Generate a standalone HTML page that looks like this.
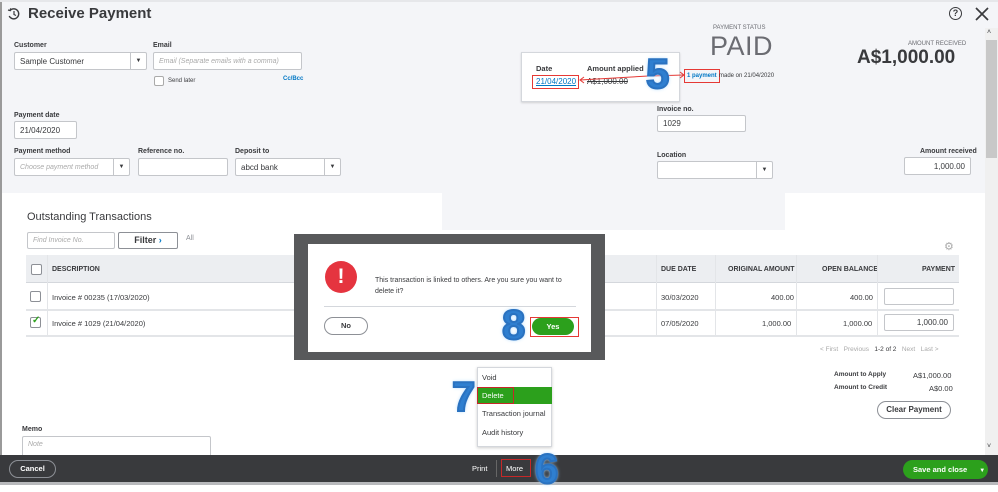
<!DOCTYPE html>
<html><head><meta charset="utf-8"><style>
*{box-sizing:border-box;margin:0;padding:0}
body{width:998px;height:485px;overflow:hidden;position:relative;background:#fff;font-family:"Liberation Sans",sans-serif;color:#393a3d;font-size:8px}
.a{position:absolute}
.lbl{position:absolute;font-size:7px;font-weight:bold;color:#393a3d}
.inp{position:absolute;background:#fff;border:1px solid #c4c6ca;border-radius:2px;font-size:8px;padding-left:5px;display:flex;align-items:center}
.ph{color:#aaa;font-style:italic;font-size:7px}
.dd{position:absolute;right:0;top:0;bottom:0;width:16px;border-left:1px solid #c4c6ca;display:flex;align-items:center;justify-content:center;font-size:6px}
.num{position:absolute;font-weight:bold;font-size:42px;color:#2f7fd0;-webkit-text-stroke:2px #2a72c0;text-shadow:0 0 2px #cfe8ff,0 0 4px #9cd0ff;line-height:1;font-family:"Liberation Sans",sans-serif}
.th{position:absolute;top:0;height:28px;display:flex;align-items:center;font-size:7px;font-weight:bold}
.cell{position:absolute;font-size:7.5px}
.cb{position:absolute;width:11px;height:11px;border:1px solid #8d9096;border-radius:2px;background:#fff}
</style></head><body>
<div class="a" style="left:0;top:0;width:998px;height:193px;background:#f4f5f8"></div>
<div class="a" style="left:442px;top:193px;width:343px;height:37px;background:#f4f5f8"></div>
<div class="a" style="left:0;top:0;width:2px;height:455px;background:#9a9a9a"></div>
<div class="a" style="left:0;top:0;width:998px;height:2px;background:#e6e7ea"></div>
<div class="a" style="left:985px;top:28px;width:13px;height:427px;background:#f0f0f0"></div>
<div class="a" style="left:986px;top:40px;width:11px;height:118px;background:#c8c8c8"></div>
<div class="a" style="left:987px;top:29px;font-size:7px">˄</div>
<div class="a" style="left:987px;top:443px;font-size:7px">˅</div>

<svg class="a" style="left:7px;top:7px" width="14" height="14" viewBox="0 0 14 14"><path d="M3 3.5A5 5 0 1 1 2.2 9" fill="none" stroke="#393a3d" stroke-width="1.4"/><path d="M7 4v3.5l2 1" fill="none" stroke="#393a3d" stroke-width="1.2"/><path d="M1 3l2.2.6L3.6 1.3" fill="none" stroke="#393a3d" stroke-width="1.2"/></svg>
<div class="a" style="left:28px;top:5px;font-size:15px;font-weight:bold;color:#393a3d">Receive Payment</div>
<div class="a" style="left:949px;top:7px;width:13px;height:13px;border:1.4px solid #393a3d;border-radius:50%;font-size:9px;font-weight:bold;text-align:center;line-height:11px">?</div>
<svg class="a" style="left:975px;top:7px" width="14" height="14"><path d="M1 1L13 13M13 1L1 13" stroke="#393a3d" stroke-width="1.7"/></svg>

<div class="lbl" style="left:14px;top:42px">Customer</div>
<div class="inp" style="left:14px;top:52px;width:133px;height:18px">Sample Customer<div class="dd">▼</div></div>
<div class="lbl" style="left:153px;top:42px">Email</div>
<div class="inp" style="left:153px;top:52px;width:149px;height:18px"><span class="ph">Email (Separate emails with a comma)</span></div>
<div class="cb" style="left:154px;top:76px;width:10px;height:10px;border-color:#aaa"></div>
<div class="a" style="left:168px;top:78px;font-size:6px">Send later</div>
<div class="a" style="left:283px;top:76px;font-size:6px;color:#0077c5;font-weight:bold">Cc/Bcc</div>

<div class="lbl" style="left:14px;top:112px">Payment date</div>
<div class="inp" style="left:14px;top:121px;width:63px;height:18px">21/04/2020</div>
<div class="lbl" style="left:14px;top:148px">Payment method</div>
<div class="inp" style="left:14px;top:158px;width:116px;height:18px"><span class="ph">Choose payment method</span><div class="dd">▼</div></div>
<div class="lbl" style="left:138px;top:148px">Reference no.</div>
<div class="inp" style="left:138px;top:158px;width:90px;height:18px"></div>
<div class="lbl" style="left:235px;top:148px">Deposit to</div>
<div class="inp" style="left:235px;top:158px;width:106px;height:18px">abcd bank<div class="dd">▼</div></div>

<div class="a" style="left:713px;top:25px;font-size:6px;color:#6b6c72">PAYMENT STATUS</div>
<div class="a" style="left:710px;top:31px;font-size:27px;color:#6b6c72;letter-spacing:.5px">PAID</div>
<div class="a" style="left:908px;top:41px;font-size:6px;color:#6b6c72">AMOUNT RECEIVED</div>
<div class="a" style="left:857px;top:47px;font-size:19px;font-weight:bold;color:#393a3d">A$1,000.00</div>

<div class="a" style="left:521px;top:52px;width:159px;height:50px;background:#fff;border:1px solid #d4d7dc;box-shadow:0 1px 2px rgba(0,0,0,.15)"></div>
<div class="a" style="left:536px;top:64px;font-size:7.5px;font-weight:bold">Date</div>
<div class="a" style="left:587px;top:64px;font-size:7.5px;font-weight:bold">Amount applied</div>
<div class="a" style="left:532px;top:75px;width:47px;height:14px;border:1px solid #e53935"></div>
<div class="a" style="left:536px;top:77px;font-size:8px;color:#0077c5;text-decoration:underline">21/04/2020</div>
<div class="a" style="left:587px;top:77px;font-size:8px;text-decoration:line-through">A$1,000.00</div>
<svg class="a" style="left:578px;top:68px" width="110" height="20"><path d="M2 12L70 8M72 8L106 7" stroke="#e53935" stroke-width="1" fill="none"/><path d="M6 9L2 12L6 15M102 4L106 7L102 10" stroke="#e53935" fill="none"/></svg>
<div class="a" style="left:684px;top:69px;width:36px;height:14px;border:1px solid #e53935"></div>
<div class="a" style="left:687px;top:73px;font-size:6px;color:#0077c5;font-weight:bold">1 payment</div>
<div class="a" style="left:719px;top:73px;font-size:6px">made on 21/04/2020</div>
<div class="num" style="left:646px;top:53px">5</div>

<div class="lbl" style="left:657px;top:106px">Invoice no.</div>
<div class="inp" style="left:657px;top:115px;width:89px;height:17px">1029</div>
<div class="lbl" style="left:657px;top:152px">Location</div>
<div class="inp" style="left:657px;top:161px;width:116px;height:18px"><div class="dd">▼</div></div>
<div class="lbl" style="left:920px;top:148px">Amount received</div>
<div class="inp" style="left:904px;top:157px;width:67px;height:18px;justify-content:flex-end;padding-right:5px">1,000.00</div>

<div class="a" style="left:27px;top:211px;font-size:11px">Outstanding Transactions</div>
<div class="inp" style="left:27px;top:232px;width:88px;height:17px"><span class="ph">Find Invoice No.</span></div>
<div class="a" style="left:118px;top:232px;width:60px;height:17px;border:1px solid #8d9096;border-radius:2px;font-size:9px;font-weight:bold;text-align:center;line-height:15px">Filter <span style="color:#0077c5">›</span></div>
<div class="a" style="left:186px;top:235px;font-size:7px;color:#8d9096">All</div>
<div class="a" style="left:944px;top:240px;font-size:11px;color:#aaa">⚙</div>

<div class="a" style="left:26px;top:255px;width:933px;height:28px;background:#eceef1;border-bottom:1px solid #d4d7dc"></div>
<div class="a" style="left:47px;top:255px;width:1px;height:81px;background:#e3e5e8"></div>
<div class="cb" style="left:31px;top:264px"></div>
<div class="th" style="left:52px;top:255px">DESCRIPTION</div>
<div class="th" style="left:661px;top:255px">DUE DATE</div>
<div class="th" style="left:728px;top:255px">ORIGINAL AMOUNT</div>
<div class="th" style="left:822px;top:255px">OPEN BALANCE</div>
<div class="th" style="left:922px;top:255px">PAYMENT</div>
<div class="a" style="left:656px;top:255px;width:1px;height:81px;background:#e3e5e8"></div>
<div class="a" style="left:715px;top:255px;width:1px;height:81px;background:#e3e5e8"></div>
<div class="a" style="left:796px;top:255px;width:1px;height:81px;background:#e3e5e8"></div>
<div class="a" style="left:877px;top:255px;width:1px;height:81px;background:#e3e5e8"></div>
<div class="a" style="left:26px;top:309px;width:933px;height:2px;background:#e3e5e8"></div>
<div class="a" style="left:26px;top:335px;width:933px;height:2px;background:#e3e5e8"></div>
<div class="cb" style="left:30px;top:291px"></div>
<div class="cell" style="left:52px;top:293px">Invoice # 00235 (17/03/2020)</div>
<div class="cell" style="left:661px;top:293px">30/03/2020</div>
<div class="cell" style="left:771px;top:293px">400.00</div>
<div class="cell" style="left:850px;top:293px">400.00</div>
<div class="inp" style="left:884px;top:288px;width:70px;height:17px"></div>
<div class="cb" style="left:30px;top:317px"></div>
<div class="a" style="left:32px;top:315px;color:#2ca01c;font-size:10px;font-weight:bold">✓</div>
<div class="cell" style="left:52px;top:319px">Invoice # 1029 (21/04/2020)</div>
<div class="cell" style="left:661px;top:319px">07/05/2020</div>
<div class="cell" style="left:762px;top:319px">1,000.00</div>
<div class="cell" style="left:843px;top:319px">1,000.00</div>
<div class="inp" style="left:884px;top:314px;width:70px;height:17px;justify-content:flex-end;padding-right:5px">1,000.00</div>

<div class="a" style="left:820px;top:346px;font-size:6.5px;color:#aaa">&lt; First &nbsp; Previous &nbsp; <span style="color:#393a3d">1-2 of 2</span> &nbsp; Next &nbsp; Last &gt;</div>
<div class="a" style="left:834px;top:371px;font-size:6.5px;font-weight:bold">Amount to Apply</div>
<div class="a" style="left:913px;top:371px;font-size:7.5px">A$1,000.00</div>
<div class="a" style="left:834px;top:384px;font-size:6.5px;font-weight:bold">Amount to Credit</div>
<div class="a" style="left:929px;top:384px;font-size:7.5px">A$0.00</div>
<div class="a" style="left:877px;top:401px;width:74px;height:18px;border:1px solid #8d9096;border-radius:9px;font-size:8px;font-weight:bold;text-align:center;line-height:16px">Clear Payment</div>

<div class="lbl" style="left:22px;top:426px">Memo</div>
<div class="inp" style="left:22px;top:436px;width:189px;height:22px;align-items:flex-start;padding-top:4px"><span class="ph">Note</span></div>

<div class="a" style="left:294px;top:234px;width:311px;height:126px;background:#58595b"></div>
<div class="a" style="left:308px;top:244px;width:283px;height:108px;background:#fff"></div>
<div class="a" style="left:325px;top:261px;width:32px;height:32px;border-radius:50%;background:#e5343f;color:#fff;font-size:21px;font-weight:bold;text-align:center;line-height:32px">!</div>
<div class="a" style="left:375px;top:275px;width:200px;font-size:7px;line-height:11px">This transaction is linked to others. Are you sure you want to delete it?</div>
<div class="a" style="left:324px;top:306px;width:252px;height:1px;background:#d4d7dc"></div>
<div class="a" style="left:324px;top:317px;width:44px;height:18px;border:1.5px solid #8d9096;border-radius:9px;font-size:7.5px;font-weight:bold;text-align:center;line-height:15px">No</div>
<div class="a" style="left:532px;top:318px;width:42px;height:17px;background:#2ca01c;border-radius:9px;color:#fff;font-size:7.5px;font-weight:bold;text-align:center;line-height:17px">Yes</div>
<div class="a" style="left:530px;top:317px;width:49px;height:20px;border:1px solid #e53935"></div>
<div class="num" style="left:502px;top:304px">8</div>

<div class="a" style="left:477px;top:367px;width:75px;height:80px;background:#fff;border:1px solid #d4d7dc;box-shadow:0 1px 3px rgba(0,0,0,.2)"></div>
<div class="a" style="left:482px;top:373px;font-size:7.5px">Void</div>
<div class="a" style="left:477px;top:387px;width:75px;height:17px;background:#2ca01c"></div>
<div class="a" style="left:477px;top:387px;width:37px;height:17px;border:1px solid #c62828"></div>
<div class="a" style="left:482px;top:391px;font-size:7.5px;color:#fff">Delete</div>
<div class="a" style="left:482px;top:409px;font-size:7.5px">Transaction journal</div>
<div class="a" style="left:482px;top:428px;font-size:7.5px">Audit history</div>
<div class="num" style="left:452px;top:376px">7</div>

<div class="a" style="left:0;top:455px;width:998px;height:27px;background:#393a3d"></div>
<div class="a" style="left:0;top:482px;width:998px;height:3px;background:#b8b9bc"></div>
<div class="a" style="left:9px;top:460px;width:47px;height:18px;border:1px solid #8d9096;border-radius:9px;color:#fff;font-size:7.5px;font-weight:bold;text-align:center;line-height:16px">Cancel</div>
<div class="a" style="left:472px;top:464px;font-size:7.5px;color:#fff">Print</div>
<div class="a" style="left:496px;top:460px;width:1px;height:17px;background:#666"></div>
<div class="a" style="left:501px;top:459px;width:30px;height:18px;border:1px solid #c62828"></div>
<div class="a" style="left:506px;top:464px;font-size:7.5px;color:#fff">More</div>
<div class="num" style="left:535px;top:448px">6</div>
<div class="a" style="left:903px;top:460px;width:85px;height:19px;background:#2ca01c;border-radius:10px;color:#fff;font-size:7.5px;font-weight:bold;line-height:19px;padding-left:10px">Save and close <span style="margin-left:10px;font-size:6px">▼</span></div>
</body></html>
